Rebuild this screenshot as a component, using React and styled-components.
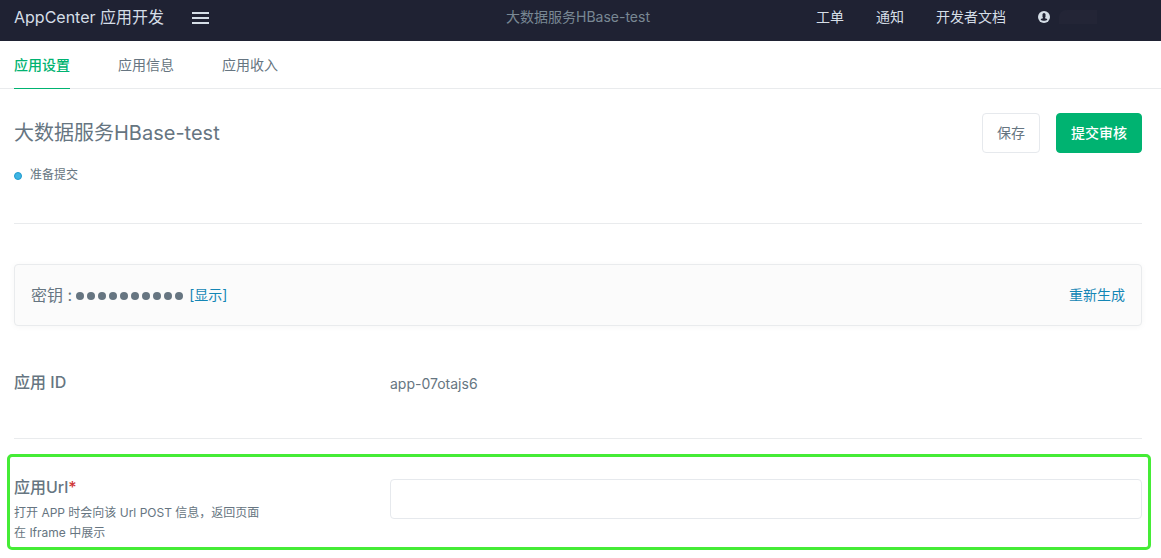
import React, { useState } from "react";
import styled, { createGlobalStyle } from "styled-components";

const GlobalStyle = createGlobalStyle`
  *, *::before, *::after { box-sizing: border-box; }
  body {
    margin: 0;
    background: #fff;
    color: #667581;
    font-family: Inter, "Noto Sans CJK SC", sans-serif;
    font-size: 14px;
    line-height: 20px;
  }
`;

const Header = styled.header`
  display: grid;
  grid-template-columns: 1fr auto 1fr;
  align-items: center;
  padding: 0 19px 7px 14px;
  height: 41px;
  background: #1f2233;
  color: #d5dee7;
`;

const Brand = styled.div`
  display: flex;
  align-items: center;
  gap: 28px;
  font-size: 16px;
`;

const MenuButton = styled.button`
  display: flex;
  padding: 2px 0 0;
  border: 0;
  background: none;
  color: inherit;
  cursor: pointer;
`;

const HeaderTitle = styled.span`
  color: #798894;
`;

const HeaderNav = styled.nav`
  display: flex;
  align-items: center;
  justify-content: flex-end;
  gap: 32px;
`;

const NavLink = styled.a`
  color: inherit;
  text-decoration: none;
`;

const Account = styled(NavLink)`
  display: flex;
  align-items: center;
  gap: 9px;
`;

const HiddenName = styled.span`
  width: 83px;
  height: 14px;
  background: linear-gradient(to right, #232536 38px, transparent 38px);
  border-radius: 8px 0 0 0;
`;

const Tabs = styled.nav`
  display: flex;
  gap: 48px;
  height: 48px;
  padding: 0 14px;
  border-bottom: 1px solid #e9ebed;
`;

const Tab = styled.a`
  height: 48px;
  line-height: 48px;
  border-bottom: 1px solid ${(p) => (p.$active ? "#00b371" : "transparent")};
  color: ${(p) => (p.$active ? "#00b371" : "#667581")};
  font-weight: ${(p) => (p.$active ? 500 : 400)};
  text-decoration: none;
`;

const Main = styled.main`
  padding: 24px 19px 8px 14px;
`;

const Summary = styled.section`
  padding-bottom: 38px;
  border-bottom: 1px solid #e9ebed;
`;

const TitleRow = styled.div`
  display: flex;
  align-items: center;
  justify-content: space-between;
`;

const Title = styled.h1`
  margin: 0;
  font-size: 20px;
  font-weight: 400;
  line-height: 40px;
`;

const Actions = styled.div`
  display: flex;
  gap: 16px;
`;

const Button = styled.button`
  height: 40px;
  padding: 0 14px;
  border: 1px solid ${(p) => (p.$primary ? "#00b371" : "#e6e9ed")};
  border-radius: 4px;
  background: ${(p) => (p.$primary ? "#00b371" : "#fff")};
  color: ${(p) => (p.$primary ? "#fff" : "#667581")};
  font: inherit;
  font-weight: ${(p) => (p.$primary ? 500 : 400)};
  cursor: pointer;
`;

const Status = styled.div`
  display: flex;
  align-items: center;
  gap: 8px;
  margin-top: 12px;
  font-size: 12px;
`;

const StatusDot = styled.span`
  width: 8px;
  height: 8px;
  margin-top: 2px;
  border: 1px solid #1f9bce;
  border-radius: 50%;
  background: #3fb5e3;
`;

const SecretCard = styled.section`
  display: flex;
  align-items: center;
  justify-content: space-between;
  height: 62px;
  margin-top: 40px;
  padding: 0 16px;
  border: 1px solid #e9ebed;
  border-radius: 4px;
  background: #fbfbfb;
  box-shadow: 0 1px 6px rgba(0, 0, 0, 0.04);
`;

const Secret = styled.div`
  display: flex;
  align-items: center;
  font-size: 16px;
`;

const Dots = styled.span`
  display: flex;
  gap: 3px;
  margin: 2px 6px 0 4px;
`;

const Dot = styled.span`
  width: 8px;
  height: 8px;
  border-radius: 50%;
  background: #667581;
`;

const LinkButton = styled.button`
  padding: 0;
  border: 0;
  background: none;
  color: #1486b5;
  font: inherit;
  font-size: 14px;
  cursor: pointer;
`;

const FieldRow = styled.section`
  display: grid;
  grid-template-columns: 1fr 2fr;
`;

const IdRow = styled(FieldRow)`
  padding: 46px 0 44px;
  border-bottom: 1px solid #e9ebed;
`;

const FieldName = styled.div`
  font-size: 16px;
  font-weight: 500;
`;

const FieldLabel = styled.label`
  display: block;
  font-size: 16px;
  font-weight: 500;
`;

const FieldValue = styled.div`
  padding-top: 2px;
`;

const UrlRow = styled(FieldRow)`
  margin: 15px -9px 0 -7px;
  padding: 20px 6px 4px 4px;
  border: 3px solid #45ec36;
  border-radius: 5px;
`;

const Required = styled.span`
  color: #cf3636;
`;

const Hint = styled.p`
  margin: 6px 0 0;
  max-width: 252px;
  font-size: 12px;
`;

const TextInput = styled.input`
  width: 100%;
  height: 40px;
  margin-top: 2px;
  padding: 0 12px;
  border: 1px solid #e6e9ed;
  border-radius: 4px;
  background: #fff;
  color: inherit;
  font: inherit;
`;

const MenuIcon = () => (
  <svg width="17" height="12" viewBox="0 0 17 12" fill="currentColor" aria-hidden="true">
    <path d="M0 0h17v2H0zM0 5h17v2H0zM0 10h17v2H0z" />
  </svg>
);

const UserIcon = () => (
  <svg width="12" height="12" viewBox="0 0 12 12" aria-hidden="true">
    <circle cx="6" cy="6" r="6" fill="#d5dee7" />
    <rect x="4.500" y="2" width="3" height="5" rx="1.500" fill="#1f2233" />
    <path d="M5 6h2v1.200c1.400.3 2.300.8 2.300 1.600C8.500 9.500 7.300 9.800 6 9.800s-2.500-.3-3.300-1c0-.8.9-1.300 2.300-1.600z" fill="#1f2233" />
  </svg>
);

export default function App() {
  const [url, setUrl] = useState("");
  return (
    <>
      <GlobalStyle />
      <Header>
        <Brand>
          <span>AppCenter 应用开发</span>
          <MenuButton aria-label="菜单"><MenuIcon /></MenuButton>
        </Brand>
        <HeaderTitle>大数据服务HBase-test</HeaderTitle>
        <HeaderNav>
          <NavLink href="#tickets">工单</NavLink>
          <NavLink href="#notices">通知</NavLink>
          <NavLink href="#docs">开发者文档</NavLink>
          <Account href="#account" aria-label="账户">
            <UserIcon />
            <HiddenName />
          </Account>
        </HeaderNav>
      </Header>
      <Tabs>
        <Tab href="#settings" $active>应用设置</Tab>
        <Tab href="#info">应用信息</Tab>
        <Tab href="#income">应用收入</Tab>
      </Tabs>
      <Main>
        <Summary>
          <TitleRow>
            <Title>大数据服务HBase-test</Title>
            <Actions>
              <Button>保存</Button>
              <Button $primary>提交审核</Button>
            </Actions>
          </TitleRow>
          <Status><StatusDot />准备提交</Status>
        </Summary>
        <SecretCard>
          <Secret>
            密钥 :
            <Dots>
              {Array.from({ length: 10 }, (_, i) => <Dot key={i} />)}
            </Dots>
            <LinkButton>[显示]</LinkButton>
          </Secret>
          <LinkButton>重新生成</LinkButton>
        </SecretCard>
        <IdRow>
          <FieldName>应用 ID</FieldName>
          <FieldValue>app-07otajs6</FieldValue>
        </IdRow>
        <UrlRow>
          <div>
            <FieldLabel htmlFor="app-url">应用Url<Required>*</Required></FieldLabel>
            <Hint>打开 APP 时会向该 Url POST 信息，返回页面在 Iframe 中展示</Hint>
          </div>
          <TextInput id="app-url" value={url} onChange={(e) => setUrl(e.target.value)} />
        </UrlRow>
      </Main>
    </>
  );
}
